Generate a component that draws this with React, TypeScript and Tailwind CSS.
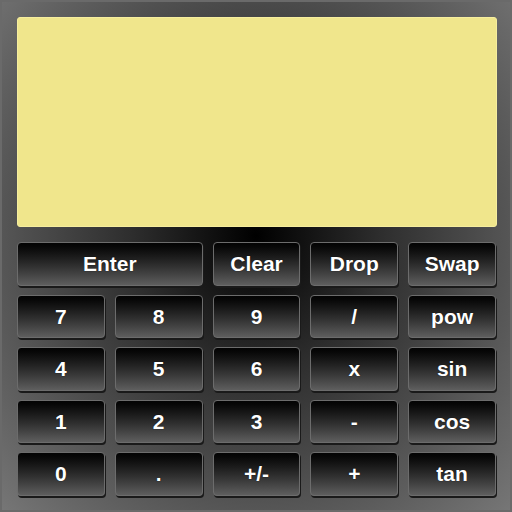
const keys: { label: string; wide?: boolean }[] = [
  { label: 'Enter', wide: true },
  { label: 'Clear' },
  { label: 'Drop' },
  { label: 'Swap' },
  { label: '7' },
  { label: '8' },
  { label: '9' },
  { label: '/' },
  { label: 'pow' },
  { label: '4' },
  { label: '5' },
  { label: '6' },
  { label: 'x' },
  { label: 'sin' },
  { label: '1' },
  { label: '2' },
  { label: '3' },
  { label: '-' },
  { label: 'cos' },
  { label: '0' },
  { label: '.' },
  { label: '+/-' },
  { label: '+' },
  { label: 'tan' },
];

export default function App() {
  return (
    <div
      className="w-[512px] h-[512px] pl-[15px] pr-[13px] pt-[15px] flex flex-col gap-[15px] border-2 border-[#6a6a6a] bg-[radial-gradient(ellipse_at_50%_46%,#000_0%,#2e2e2e_35%,#555_70%,#767676_100%)]"
      style={{ fontFamily: '"Liberation Sans", Arial, sans-serif' }}
    >
      {/* Display */}
      <div className="h-[210px] shrink-0 rounded-[3px] bg-[#f0e68c] border border-[#f6ee9e]" />

      {/* Keypad */}
      <div className="grid grid-cols-5 grid-rows-5 gap-x-[10px] gap-y-[9px] h-[254px] mr-[1px] shrink-0">
        {keys.map((k) => (
          <button
            key={k.label}
            className={`${k.wide ? 'col-span-2' : ''} rounded-[4px] border border-[#6c6c6c] bg-gradient-to-b from-[#030303] to-[#5e5e5e] shadow-[1px_2px_0_#1a1a1a] text-white font-bold text-[21px] [text-shadow:0_0_1px_#000]`}
          >
            {k.label}
          </button>
        ))}
      </div>
    </div>
  );
}
